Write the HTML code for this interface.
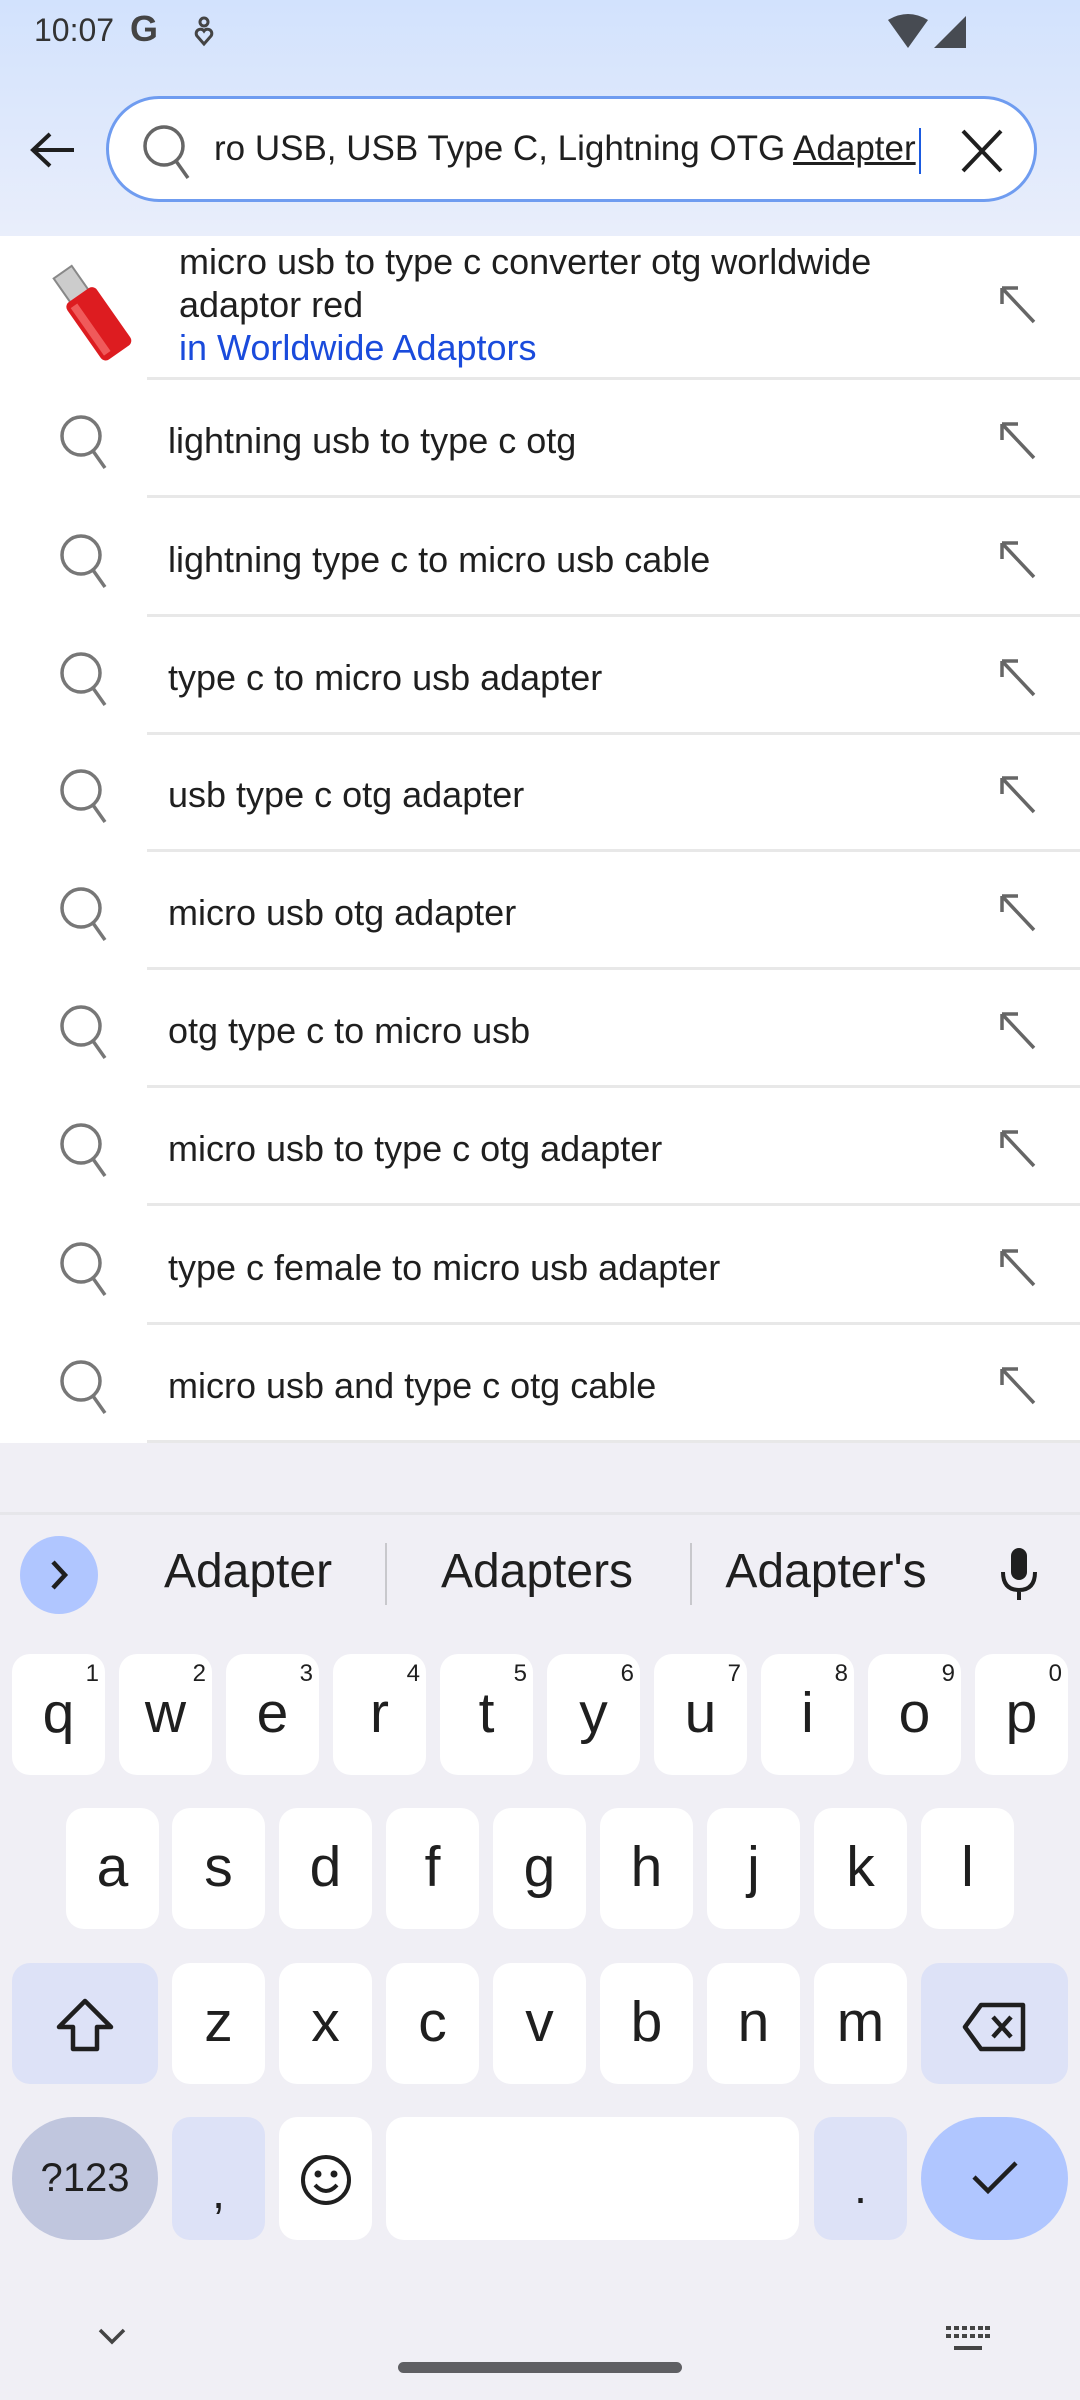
<!DOCTYPE html>
<html><head><meta charset="utf-8"><style>
*{margin:0;padding:0;box-sizing:border-box}
body{width:1080px;height:2400px;position:relative;overflow:hidden;font-family:"Liberation Sans",Roboto,sans-serif;background:#f0eff5;color:#1f1f1f}
.abs{position:absolute}
.hdr{left:0;top:0;width:1080px;height:236px;background:linear-gradient(#d2e2fd,#e9eefb)}
.list{left:0;top:236px;width:1080px;height:1207px;background:#fff}
.row{position:absolute;left:0;width:1080px;height:118px}
.row .t{position:absolute;left:168px;top:2px;line-height:118px;font-size:36px;color:#1f1f1f}
.row .sep{position:absolute;left:147px;right:0;bottom:0;height:3px;background:#e8e8e8}
.row svg.q{position:absolute;left:58px;top:32px}
.row svg.a{position:absolute;left:998px;top:40px}
.key{position:absolute;width:93px;height:121px;background:#fff;border-radius:18px;text-align:center;font-size:57px;line-height:118px;color:#1f1f1f}
.key sup{position:absolute;right:6px;top:8px;font-size:24px;line-height:24px}
.kb{left:0;top:1514px;width:1080px;height:886px;background:#f0eff5}
</style></head><body>
<div class="abs hdr"></div>
<div class="abs" style="left:34px;top:12px;font-size:32px;color:#333">10:07</div>
<div class="abs" style="left:130px;top:8px;font-size:36px;font-weight:bold;color:#444">G</div>
<svg class="abs" style="left:194px;top:16px" width="20" height="32" viewBox="0 0 20 32"><circle cx="10" cy="6" r="4" fill="none" stroke="#444" stroke-width="3"/><path d="M10 28 L3 20 A4 4 0 0 1 10 15 A4 4 0 0 1 17 20 Z" fill="none" stroke="#444" stroke-width="3"/></svg>
<svg class="abs" style="left:888px;top:14px" width="80" height="36" viewBox="0 0 80 36"><path d="M0 6 Q20 -6 40 6 L20 34 Z" fill="#474b52"/><path d="M78 2 L78 34 L46 34 Z" fill="#474b52"/></svg>
<svg class="abs" style="left:28px;top:130px" width="50" height="40" viewBox="0 0 50 40"><path d="M46 20 H6 M22 4 L5 20 L22 36" fill="none" stroke="#1f1f1f" stroke-width="4"/></svg>
<div class="abs" style="left:106px;top:96px;width:931px;height:106px;border:3px solid #6f9cf0;border-radius:53px;background:#fff"></div>
<svg class="abs" style="left:141px;top:122px" width="54" height="60" viewBox="0 0 54 60"><circle cx="23" cy="24" r="19" fill="none" stroke="#666" stroke-width="3.5"/><path d="M35 39 L47 56" stroke="#666" stroke-width="3.5"/></svg>
<div class="abs" style="left:214px;top:129px;font-size:35px;color:#1f1f1f;white-space:nowrap">ro USB, USB Type C, Lightning OTG <span style="text-decoration:underline">Adapter</span></div>
<div class="abs" style="left:919px;top:128px;width:2px;height:46px;background:#1a5ae0"></div>
<svg class="abs" style="left:960px;top:128px" width="44" height="46" viewBox="0 0 44 46"><path d="M3 3 L41 43 M41 3 L3 43" stroke="#1f1f1f" stroke-width="4"/></svg>

<div class="abs list"></div>
<div class="row" style="top:236px;height:144px">
<svg style="position:absolute;left:48px;top:18px" width="90" height="116" viewBox="0 0 90 116"><g transform="rotate(-35 45 58)"><rect x="32" y="8" width="22" height="30" fill="#ccc" stroke="#888" stroke-width="2"/><rect x="25" y="36" width="36" height="70" rx="6" fill="#dd1c20"/><rect x="29" y="42" width="8" height="58" fill="#f05a5a"/></g></svg>
<div style="position:absolute;left:179px;top:4px;font-size:36px;line-height:43px">micro usb to type c converter otg worldwide<br>adaptor red<br><span style="color:#1a4bdc">in Worldwide Adaptors</span></div>
<svg style="position:absolute;left:998px;top:48px" width="40" height="40" viewBox="0 0 40 40"><path d="M4 4 L4 20 M4 4 L20 4 M4 4 L36 38" fill="none" stroke="#666" stroke-width="3.5"/></svg>
<div class="sep"></div></div>

<div class="row" style="top:380px"><svg class="q" width="54" height="60" viewBox="0 0 54 60"><circle cx="23" cy="24" r="19" fill="none" stroke="#777" stroke-width="3.5"/><path d="M35 39 L47 56" stroke="#777" stroke-width="3.5"/></svg><div class="t">lightning usb to type c otg</div><svg class="a" width="40" height="40" viewBox="0 0 40 40"><path d="M4 4 L4 20 M4 4 L20 4 M4 4 L36 38" fill="none" stroke="#666" stroke-width="3.5"/></svg><div class="sep"></div></div>
<div class="row" style="top:499px"><svg class="q" width="54" height="60" viewBox="0 0 54 60"><circle cx="23" cy="24" r="19" fill="none" stroke="#777" stroke-width="3.5"/><path d="M35 39 L47 56" stroke="#777" stroke-width="3.5"/></svg><div class="t">lightning type c to micro usb cable</div><svg class="a" width="40" height="40" viewBox="0 0 40 40"><path d="M4 4 L4 20 M4 4 L20 4 M4 4 L36 38" fill="none" stroke="#666" stroke-width="3.5"/></svg><div class="sep"></div></div>
<div class="row" style="top:617px"><svg class="q" width="54" height="60" viewBox="0 0 54 60"><circle cx="23" cy="24" r="19" fill="none" stroke="#777" stroke-width="3.5"/><path d="M35 39 L47 56" stroke="#777" stroke-width="3.5"/></svg><div class="t">type c to micro usb adapter</div><svg class="a" width="40" height="40" viewBox="0 0 40 40"><path d="M4 4 L4 20 M4 4 L20 4 M4 4 L36 38" fill="none" stroke="#666" stroke-width="3.5"/></svg><div class="sep"></div></div>
<div class="row" style="top:734px"><svg class="q" width="54" height="60" viewBox="0 0 54 60"><circle cx="23" cy="24" r="19" fill="none" stroke="#777" stroke-width="3.5"/><path d="M35 39 L47 56" stroke="#777" stroke-width="3.5"/></svg><div class="t">usb type c otg adapter</div><svg class="a" width="40" height="40" viewBox="0 0 40 40"><path d="M4 4 L4 20 M4 4 L20 4 M4 4 L36 38" fill="none" stroke="#666" stroke-width="3.5"/></svg><div class="sep"></div></div>
<div class="row" style="top:852px"><svg class="q" width="54" height="60" viewBox="0 0 54 60"><circle cx="23" cy="24" r="19" fill="none" stroke="#777" stroke-width="3.5"/><path d="M35 39 L47 56" stroke="#777" stroke-width="3.5"/></svg><div class="t">micro usb otg adapter</div><svg class="a" width="40" height="40" viewBox="0 0 40 40"><path d="M4 4 L4 20 M4 4 L20 4 M4 4 L36 38" fill="none" stroke="#666" stroke-width="3.5"/></svg><div class="sep"></div></div>
<div class="row" style="top:970px"><svg class="q" width="54" height="60" viewBox="0 0 54 60"><circle cx="23" cy="24" r="19" fill="none" stroke="#777" stroke-width="3.5"/><path d="M35 39 L47 56" stroke="#777" stroke-width="3.5"/></svg><div class="t">otg type c to micro usb</div><svg class="a" width="40" height="40" viewBox="0 0 40 40"><path d="M4 4 L4 20 M4 4 L20 4 M4 4 L36 38" fill="none" stroke="#666" stroke-width="3.5"/></svg><div class="sep"></div></div>
<div class="row" style="top:1088px"><svg class="q" width="54" height="60" viewBox="0 0 54 60"><circle cx="23" cy="24" r="19" fill="none" stroke="#777" stroke-width="3.5"/><path d="M35 39 L47 56" stroke="#777" stroke-width="3.5"/></svg><div class="t">micro usb to type c otg adapter</div><svg class="a" width="40" height="40" viewBox="0 0 40 40"><path d="M4 4 L4 20 M4 4 L20 4 M4 4 L36 38" fill="none" stroke="#666" stroke-width="3.5"/></svg><div class="sep"></div></div>
<div class="row" style="top:1207px"><svg class="q" width="54" height="60" viewBox="0 0 54 60"><circle cx="23" cy="24" r="19" fill="none" stroke="#777" stroke-width="3.5"/><path d="M35 39 L47 56" stroke="#777" stroke-width="3.5"/></svg><div class="t">type c female to micro usb adapter</div><svg class="a" width="40" height="40" viewBox="0 0 40 40"><path d="M4 4 L4 20 M4 4 L20 4 M4 4 L36 38" fill="none" stroke="#666" stroke-width="3.5"/></svg><div class="sep"></div></div>
<div class="row" style="top:1325px"><svg class="q" width="54" height="60" viewBox="0 0 54 60"><circle cx="23" cy="24" r="19" fill="none" stroke="#777" stroke-width="3.5"/><path d="M35 39 L47 56" stroke="#777" stroke-width="3.5"/></svg><div class="t">micro usb and type c otg cable</div><svg class="a" width="40" height="40" viewBox="0 0 40 40"><path d="M4 4 L4 20 M4 4 L20 4 M4 4 L36 38" fill="none" stroke="#666" stroke-width="3.5"/></svg><div class="sep"></div></div>

<div class="abs kb"></div>
<div class="abs" style="left:0;top:1512px;width:1080px;height:3px;background:#e6e6ea"></div>
<div class="abs" style="left:20px;top:1536px;width:78px;height:78px;border-radius:50%;background:#b0c6ff"></div>
<svg class="abs" style="left:44px;top:1556px" width="30" height="38" viewBox="0 0 30 38"><path d="M9 6 L21 19 L9 32" fill="none" stroke="#1f1f1f" stroke-width="4.5"/></svg>
<div class="abs" style="left:138px;top:1544px;width:220px;text-align:center;font-size:48px;color:#1f1f1f">Adapter</div>
<div class="abs" style="left:385px;top:1543px;width:2px;height:62px;background:#c8c8cc"></div>
<div class="abs" style="left:427px;top:1544px;width:220px;text-align:center;font-size:48px;color:#1f1f1f">Adapters</div>
<div class="abs" style="left:690px;top:1543px;width:2px;height:62px;background:#c8c8cc"></div>
<div class="abs" style="left:706px;top:1544px;width:240px;text-align:center;font-size:48px;color:#1f1f1f">Adapter's</div>
<svg class="abs" style="left:998px;top:1546px" width="42" height="56" viewBox="0 0 42 56"><rect x="13" y="2" width="16" height="32" rx="8" fill="#1f1f1f"/><path d="M5 26 Q5 44 21 44 Q37 44 37 26 M21 44 V54" fill="none" stroke="#1f1f1f" stroke-width="4"/></svg>

<div class="key" style="left:12px;top:1654px">q<sup>1</sup></div>
<div class="key" style="left:119px;top:1654px">w<sup>2</sup></div>
<div class="key" style="left:226px;top:1654px">e<sup>3</sup></div>
<div class="key" style="left:333px;top:1654px">r<sup>4</sup></div>
<div class="key" style="left:440px;top:1654px">t<sup>5</sup></div>
<div class="key" style="left:547px;top:1654px">y<sup>6</sup></div>
<div class="key" style="left:654px;top:1654px">u<sup>7</sup></div>
<div class="key" style="left:761px;top:1654px">i<sup>8</sup></div>
<div class="key" style="left:868px;top:1654px">o<sup>9</sup></div>
<div class="key" style="left:975px;top:1654px">p<sup>0</sup></div>
<div class="key" style="left:66px;top:1808px">a</div>
<div class="key" style="left:172px;top:1808px">s</div>
<div class="key" style="left:279px;top:1808px">d</div>
<div class="key" style="left:386px;top:1808px">f</div>
<div class="key" style="left:493px;top:1808px">g</div>
<div class="key" style="left:600px;top:1808px">h</div>
<div class="key" style="left:707px;top:1808px">j</div>
<div class="key" style="left:814px;top:1808px">k</div>
<div class="key" style="left:921px;top:1808px">l</div>
<div class="key" style="left:12px;top:1963px;width:146px;background:#dde2f7"><svg style="margin-top:34px" width="60" height="56" viewBox="0 0 60 56"><path d="M30 4 L56 30 H42 V52 H18 V30 H4 Z" fill="none" stroke="#1f1f1f" stroke-width="4.5" stroke-linejoin="round"/></svg></div>
<div class="key" style="left:172px;top:1963px">z</div>
<div class="key" style="left:279px;top:1963px">x</div>
<div class="key" style="left:386px;top:1963px">c</div>
<div class="key" style="left:493px;top:1963px">v</div>
<div class="key" style="left:600px;top:1963px">b</div>
<div class="key" style="left:707px;top:1963px">n</div>
<div class="key" style="left:814px;top:1963px">m</div>
<div class="key" style="left:921px;top:1963px;width:147px;background:#dde2f7"><svg style="margin-top:38px" width="68" height="52" viewBox="0 0 68 52"><path d="M20 4 H62 V48 H20 L4 26 Z" fill="none" stroke="#1f1f1f" stroke-width="4.5" stroke-linejoin="round"/><path d="M32 16 L50 36 M50 16 L32 36" stroke="#1f1f1f" stroke-width="4.5"/></svg></div>
<div class="key" style="left:12px;top:2117px;width:146px;height:123px;border-radius:62px;background:#c0c6de;font-size:40px;line-height:123px">?123</div>
<div class="key" style="left:172px;top:2117px;height:123px;background:#dde2f7;font-size:46px;line-height:150px">,</div>
<div class="key" style="left:279px;top:2117px;height:123px"><svg style="margin-top:36px" width="54" height="54" viewBox="0 0 54 54"><circle cx="27" cy="27" r="23" fill="none" stroke="#1f1f1f" stroke-width="4"/><circle cx="19" cy="21" r="3.5" fill="#1f1f1f"/><circle cx="35" cy="21" r="3.5" fill="#1f1f1f"/><path d="M16 32 Q27 44 38 32" fill="none" stroke="#1f1f1f" stroke-width="4"/></svg></div>
<div class="key" style="left:386px;top:2117px;width:413px;height:123px"></div>
<div class="key" style="left:814px;top:2117px;height:123px;background:#dde2f7;font-size:46px;line-height:140px">.</div>
<div class="key" style="left:921px;top:2117px;width:147px;height:123px;border-radius:62px;background:#b0c6ff"><svg style="margin-top:40px" width="50" height="40" viewBox="0 0 50 40"><path d="M4 20 L18 34 L46 6" fill="none" stroke="#1f1f1f" stroke-width="4.5"/></svg></div>

<svg class="abs" style="left:96px;top:2326px" width="32" height="22" viewBox="0 0 32 22"><path d="M4 4 L16 16 L28 4" fill="none" stroke="#444" stroke-width="3.5"/></svg>
<svg class="abs" style="left:946px;top:2324px" width="44" height="30" viewBox="0 0 44 30"><g fill="#444"><rect x="0" y="2" width="5" height="4"/><rect x="8" y="2" width="5" height="4"/><rect x="16" y="2" width="5" height="4"/><rect x="24" y="2" width="5" height="4"/><rect x="32" y="2" width="5" height="4"/><rect x="39" y="2" width="5" height="4"/><rect x="0" y="10" width="5" height="4"/><rect x="8" y="10" width="5" height="4"/><rect x="16" y="10" width="5" height="4"/><rect x="24" y="10" width="5" height="4"/><rect x="32" y="10" width="5" height="4"/><rect x="39" y="10" width="5" height="4"/><rect x="8" y="22" width="28" height="4"/></g></svg>
<div class="abs" style="left:398px;top:2362px;width:284px;height:11px;border-radius:6px;background:#5f5f63"></div>
</body></html>
